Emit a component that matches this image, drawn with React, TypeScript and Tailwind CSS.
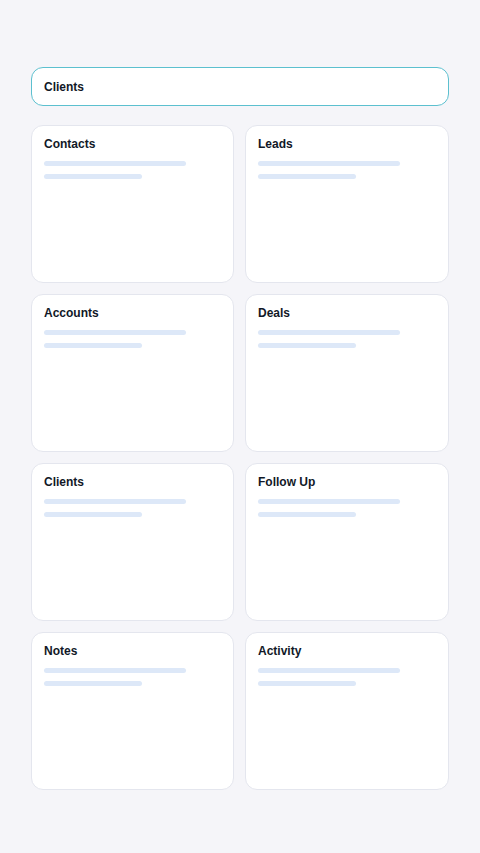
const cards = ["Contacts", "Leads", "Accounts", "Deals", "Clients", "Follow Up", "Notes", "Activity"];

export default function App() {
  return (
    <div
      className="min-h-[853px] w-full bg-[#f5f5f9] px-[31px] pt-[67px]"
      style={{ fontFamily: "'Liberation Sans', Arial, sans-serif" }}
    >
      <div className="flex h-[39px] items-center rounded-[12px] border-[1.5px] border-[#5cc0cf] bg-white px-[12px]">
        <span className="text-[12px] font-bold text-[#111827]">Clients</span>
      </div>
      <div className="mt-[19px] grid grid-cols-[203px_1fr] gap-[11px]">
        {cards.map((title) => (
          <div
            key={title}
            className="h-[158px] rounded-[12px] border border-[#e4e6ee] bg-white px-[12px] pt-[10px]"
          >
            <h3 className="text-[12px] font-bold leading-4 text-[#111827]">{title}</h3>
            <div className="mt-[9px] h-[5px] w-[142px] rounded-full bg-[#dde8f8]" />
            <div className="mt-[8px] h-[5px] w-[98px] rounded-full bg-[#dde8f8]" />
          </div>
        ))}
      </div>
    </div>
  );
}
